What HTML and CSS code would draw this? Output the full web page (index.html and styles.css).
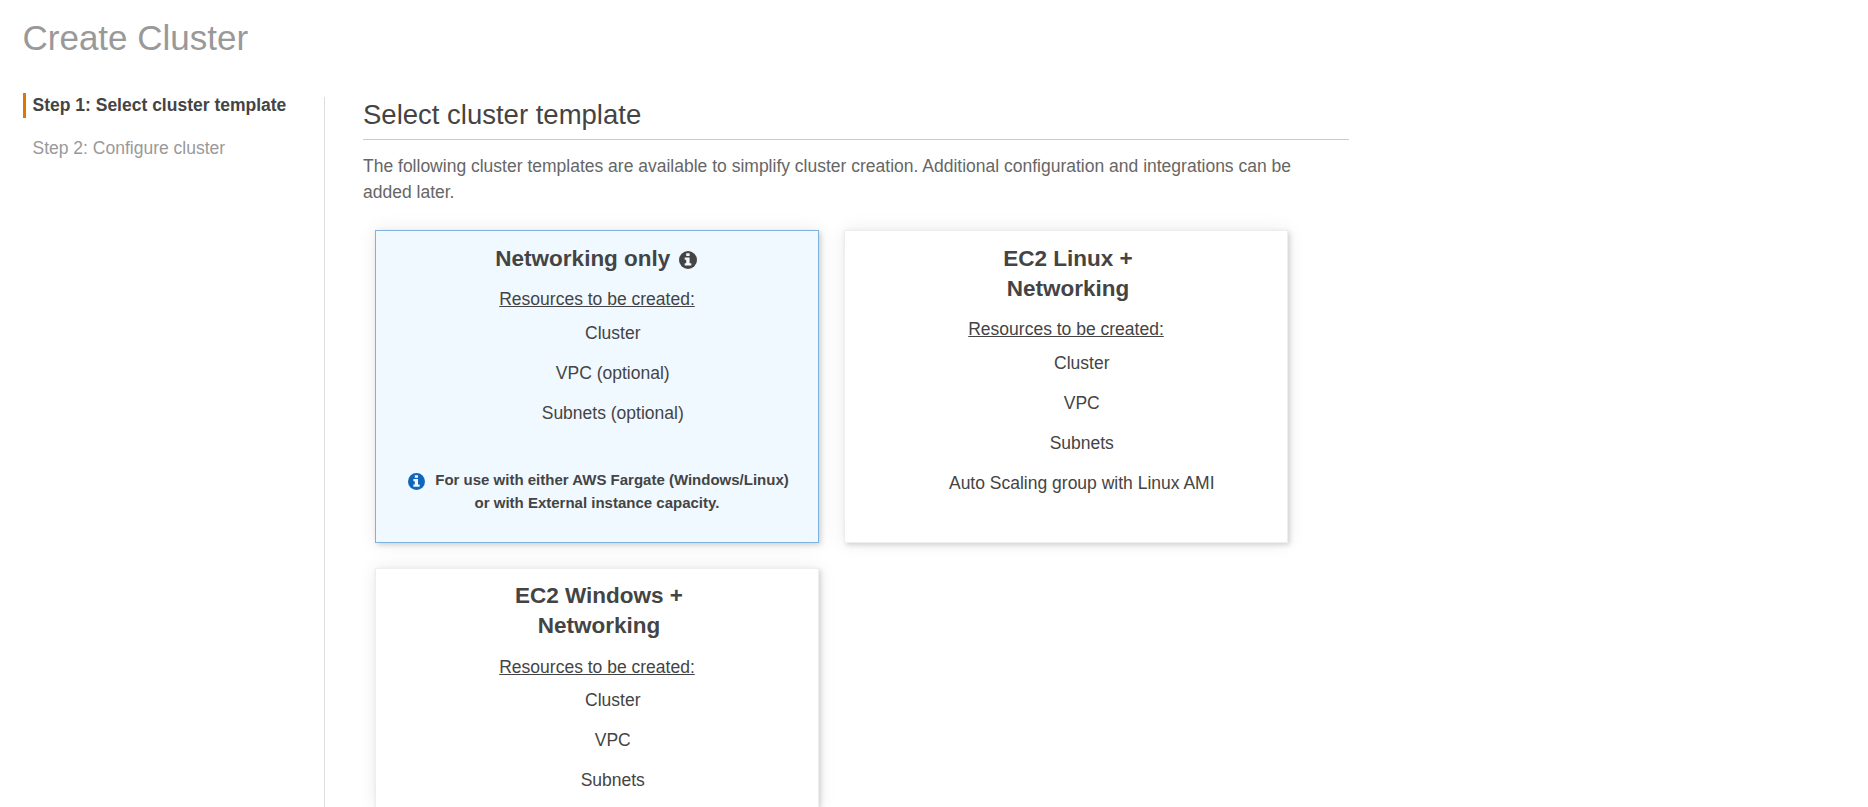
FILE: index.html
```html
<!DOCTYPE html>
<html lang="en">
<head>
<meta charset="utf-8">
<title>Create Cluster</title>
<link rel="stylesheet" href="styles.css">
</head>
<body>
<h1 class="page-title">Create Cluster</h1>
<div class="wizard">
  <nav class="steps">
    <div class="step step-active">Step 1: Select cluster template</div>
    <div class="step">Step 2: Configure cluster</div>
  </nav>
  <main class="content">
    <h2 class="section-title">Select cluster template</h2>
    <p class="intro">The following cluster templates are available to simplify cluster creation. Additional configuration and integrations can be added later.</p>
    <div class="cards">
      <section class="card card-selected">
        <h3 class="card-title card-title-info">Networking only <svg class="info" viewBox="0 0 18 18"><circle cx="9" cy="9" r="9" fill="#444"/><path fill="#f0f9ff" d="M7.200 2.300h3.400v2.700H7.200zM5.700 6.400h4.900v5.900h1.700v2.300H5.700v-2.300h1.500V8.700H5.700z"/></svg></h3>
        <div class="resources">Resources to be created:</div>
        <ul class="list"><li>Cluster</li><li>VPC (optional)</li><li>Subnets (optional)</li></ul>
        <p class="note"><svg class="info info-blue" viewBox="0 0 18 18"><circle cx="9" cy="9" r="9" fill="#1166bb"/><path fill="#f0f9ff" d="M7.200 2.300h3.400v2.700H7.200zM5.700 6.400h4.900v5.900h1.700v2.300H5.700v-2.300h1.500V8.700H5.700z"/></svg>For use with either AWS Fargate (Windows/Linux)<br>or with External instance capacity.</p>
      </section>
      <section class="card">
        <h3 class="card-title">EC2 Linux +<br>Networking</h3>
        <div class="resources">Resources to be created:</div>
        <ul class="list"><li>Cluster</li><li>VPC</li><li>Subnets</li><li>Auto Scaling group with Linux AMI</li></ul>
      </section>
      <section class="card card-cut">
        <h3 class="card-title">EC2 Windows +<br>Networking</h3>
        <div class="resources">Resources to be created:</div>
        <ul class="list"><li>Cluster</li><li>VPC</li><li>Subnets</li></ul>
      </section>
    </div>
  </main>
</div>
</body>
</html>
```
FILE: styles.css
```css
* { box-sizing: border-box; }
body {
  margin: 0;
  height: 807px;
  overflow: hidden;
  background: #fff;
  color: #444;
  font: 17.5px/26px "Liberation Sans", Arial, sans-serif;
}
h1, h2, h3, p, ul { margin: 0; padding: 0; }
.page-title {
  padding: 17px 0 0 22.5px;
  height: 93px;
  font-size: 35px;
  line-height: 42px;
  font-weight: 400;
  color: #999;
}
.wizard { display: flex; height: 714px; }
.steps {
  width: 301px;
  margin-left: 23px;
  display: flex;
  flex-direction: column;
  gap: 18px;
}
.step {
  height: 25px;
  line-height: 25px;
  padding-left: 6.5px;
  border-left: 3px solid transparent;
  color: #999;
}
.step-active { border-color: #e07700; color: #444; font-weight: 700; }
.content {
  width: 1025px;
  margin-top: 4px;
  padding-left: 38px;
  border-left: 1px solid #ddd;
}
.section-title {
  height: 43px;
  padding-top: 1px;
  border-bottom: 1px solid #ccc;
  font-size: 27.5px;
  line-height: 34px;
  font-weight: 400;
}
.intro { width: 940px; padding-top: 13px; color: #666; }
.cards {
  display: grid;
  grid-template-columns: 444px 444px;
  gap: 25px;
  margin: 25px 0 0 12px;
}
.card {
  height: 313px;
  padding-top: 13px;
  border: 1px solid #eee;
  background: #fff;
  text-align: center;
  box-shadow: 2px 2px 5px rgba(0, 0, 0, .15), 0 0 18px rgba(0, 0, 0, .08);
}
.card-selected { background: #f0f9ff; border-color: #7fb2e0; }
.card-title { font-size: 22.5px; line-height: 30px; padding-left: 4px; }
.card-title-info { height: 30px; padding: 0 2px 0 0; }
.info { width: 18px; height: 18px; vertical-align: -3px; margin-left: 2px; }
.info-blue { width: 17px; height: 17px; vertical-align: -5px; margin: 0 10px 0 3px; }
.resources { margin-top: 12px; text-decoration: underline; }
.list {
  display: flex;
  flex-direction: column;
  gap: 14px;
  margin-top: 8px;
  padding-left: 31.5px;
  list-style: none;
}
.note { margin-top: 42px; font-size: 15px; line-height: 23px; font-weight: 700; }
/* The last card runs to the bottom of the viewport */
.card-cut { height: 239px; padding-top: 12px; border-bottom: 0; }
.card-cut .resources { margin-top: 13px; }
.card-cut .list { margin-top: 7px; }
```
